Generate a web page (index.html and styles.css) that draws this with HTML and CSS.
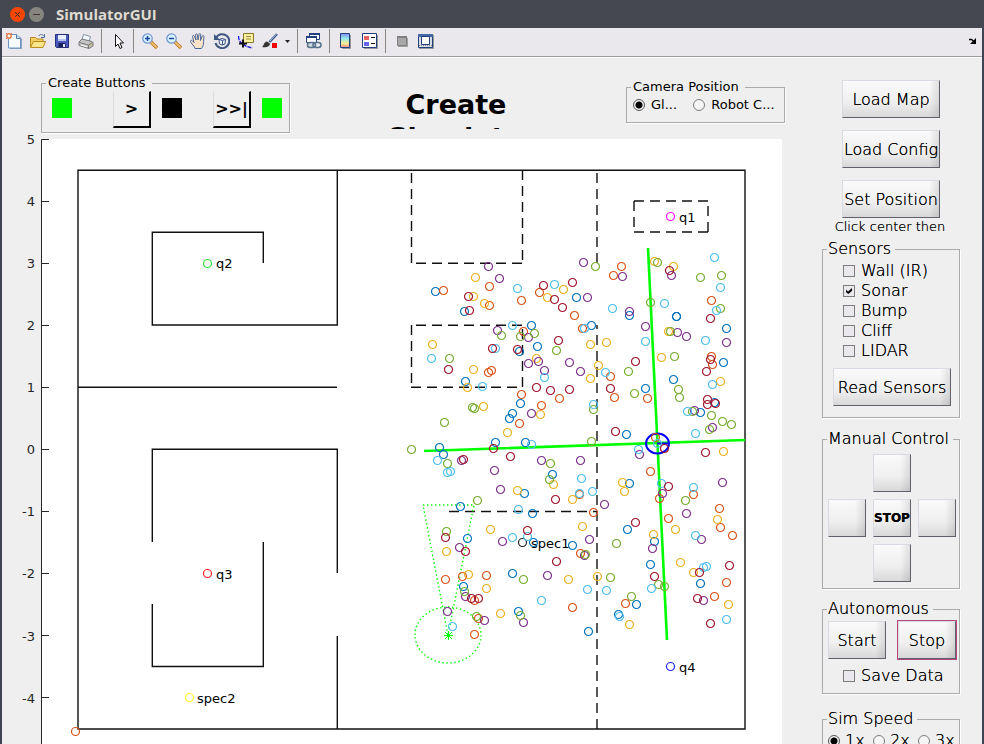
FILE: index.html
```html
<!DOCTYPE html>
<html lang="en">
<head>
<meta charset="utf-8">
<title>SimulatorGUI</title>
<link rel="stylesheet" href="styles.css">
</head>
<body>
<header class="titlebar">
  <button class="win close" aria-label="Close"><svg viewBox="0 0 15 15"><path d="M5 5l5 5M10 5l-5 5"/></svg></button>
  <button class="win minimize" aria-label="Minimize"><svg viewBox="0 0 15 15"><path d="M4 7.500h7"/></svg></button>
  <h1>SimulatorGUI</h1>
</header>
<div class="window">
  <nav class="toolbar" aria-label="Figure toolbar">
    <button class="tool" aria-label="New"><svg viewBox="0 0 16 16"><path d="M4 3h9l3 3v10H4z" fill="#8fa3ba"/><path d="M2.500 1.500h8l4 4v9.500h-12z" fill="#f5faff" stroke="#6f95c4"/><path d="M10.500 1.500v4h4" fill="#c9dcf2" stroke="#4f79b0"/><circle cx="3" cy="3" r="2.200" fill="#fff" stroke="#e07a50" stroke-width="1.500"/><path d="M0 0l1 1M6 0L5 1M0 6l1-1" stroke="#e07a50"/></svg></button>
    <button class="tool" aria-label="Open"><svg viewBox="0 0 16 16"><path d="M.5 14V4.500h5L7 6h6v3" fill="#f3cf63" stroke="#b98a1c"/><path d="M.5 14.500L3.500 8.500h12l-2.500 6z" fill="#fde68a" stroke="#b98a1c"/><path d="M8.500 3c2-2.500 4.500-1.500 5.500.5M14.500 1v3.500H11" fill="none" stroke="#4f6f9f"/></svg></button>
    <button class="tool" aria-label="Save"><svg viewBox="0 0 16 16"><path d="M1.500 1.500h13v13h-12l-1-1z" fill="#4a57bd" stroke="#252f78"/><path d="M4 2h8v6H4z" fill="#e9effb"/><path d="M4 6h8v2H4z" fill="#b6c5e8"/><path d="M4.500 10h7v4h-7z" fill="#18205c"/><path d="M9 11h2v3H9z" fill="#dde4f5"/></svg></button>
    <button class="tool" aria-label="Print"><svg viewBox="0 0 16 16"><path d="M4 7l1.500-5.500 7 2L11 9z" fill="#f6faff" stroke="#8093a8"/><path d="M1 9l3-3 10 2.500 1 1V13l-4 2.500L1 12.500z" fill="#c6c6c6" stroke="#777"/><path d="M1.500 9.500l9 2.500 4-2.500M10.500 12v3" fill="none" stroke="#777"/><path d="M3 12l6 1.800" stroke="#fff"/><path d="M11.500 12.700l2-1.200" stroke="#d6b234"/></svg></button>
    <span class="sep"></span>
    <button class="tool" aria-label="Edit plot"><svg viewBox="0 0 16 16"><path d="M5.500 1.500v12l2.500-2.500 2 4.500 2-1-2-4.500h3.500z" fill="#fff" stroke="#111"/></svg></button>
    <span class="sep"></span>
    <button class="tool" aria-label="Zoom in"><svg viewBox="0 0 16 16"><path d="M9 9l6 6" stroke="#b9792c" stroke-width="3.500"/><path d="M9 9l5.500 5.500" stroke="#f4bb6b" stroke-width="2"/><circle cx="5.500" cy="5.500" r="4.700" fill="#d9f2ff" stroke="#7498c9" stroke-width="1.300"/><path d="M3 5.500h5M5.500 3v5" stroke="#164a9c" stroke-width="1.500"/></svg></button>
    <button class="tool" aria-label="Zoom out"><svg viewBox="0 0 16 16"><path d="M9 9l6 6" stroke="#b9792c" stroke-width="3.500"/><path d="M9 9l5.500 5.500" stroke="#f4bb6b" stroke-width="2"/><circle cx="5.500" cy="5.500" r="4.700" fill="#d9f2ff" stroke="#7498c9" stroke-width="1.300"/><path d="M3 5.500h5" stroke="#164a9c" stroke-width="1.500"/></svg></button>
    <button class="tool" aria-label="Pan"><svg viewBox="0 0 16 16"><path d="M5 15.500c0-2-4-5-4.500-7C.5 7 2 7 2.500 8L4 9.500 2.500 3.500c0-1.500 1.500-1.500 2 0L6 7 5.500 2c0-1.500 2-1.500 2 0L8 7l1-5.500c0-1.500 2-1 1.700.5L10.500 7.500l1.500-4c.5-1.500 2.500-1 2 .5-1 4 .5 8-2.500 11.500z" fill="#fde3c8" stroke="#4a679a"/></svg></button>
    <button class="tool" aria-label="Rotate 3D"><svg viewBox="0 0 16 16"><path d="M2 5a7 7 0 1 1-.5 5" fill="none" stroke="#3f5680" stroke-width="2"/><path d="M0 1v6h6z" fill="#3f5680"/><path d="M5 6.500l3-1 3.500 1-.5 4.500-3 1-2.500-1zM5 6.500l3.500 1 3-1M8.500 7.500V12" fill="#eef4fc" stroke="#3f5680"/></svg></button>
    <button class="tool" aria-label="Data cursor"><svg viewBox="0 0 16 16"><path d="M.5 3c0 5 3 10 14 12" fill="none" stroke="#1515f0" stroke-width="1.300" stroke-dasharray="4 1"/><path d="M5.500.5h10v9h-7l-3 3z" fill="#f8f0a0" stroke="#8a7a2a"/><path d="M8 3.500h5M8 6h5" stroke="#9a8b40"/><path d="M1 10.500h8M5 6.500v8" stroke="#111" stroke-width="2"/></svg></button>
    <button class="tool" aria-label="Brush"><svg viewBox="0 0 16 16"><path d="M15 1L7.500 9" stroke="#3e5585" stroke-width="2.500"/><path d="M14.500 1L8 8" stroke="#9fc0ea"/><path d="M0 14c2-1 1.500-5 5-5.500l3 2c0 3-4 4.500-8 3.500z" fill="#333"/><path d="M10 10h5v5h-5z" fill="#f00000"/></svg></button>
    <button class="tool narrow" aria-label="Brush colour"><svg viewBox="0 0 16 16"><path d="M5 7h5l-2.500 3z" fill="#222"/></svg></button>
    <span class="sep"></span>
    <button class="tool" aria-label="Link plot"><svg viewBox="0 0 16 16"><path d="M3.500.5h10v6h-10z" fill="#fff" stroke="#23407e"/><path d="M3 0h11v2H3z" fill="#23407e"/><path d="M.5 3.500h10v6H.5z" fill="#fff" stroke="#23407e"/><path d="M0 3h11v2H0z" fill="#23407e"/><rect x="1.500" y="9.500" width="8" height="5" rx="2.500" fill="#cfdbe6" stroke="#58718c" stroke-width="1.500"/><rect x="7" y="9.500" width="8" height="5" rx="2.500" fill="none" stroke="#58718c" stroke-width="1.500"/></svg></button>
    <span class="sep"></span>
    <button class="tool" aria-label="Insert colorbar"><svg viewBox="0 0 16 16"><defs><linearGradient id="bar" x2="0" y2="1"><stop offset="0" stop-color="#8a8af5"/><stop offset=".35" stop-color="#8fe8f0"/><stop offset=".7" stop-color="#f5ee94"/><stop offset="1" stop-color="#f08c8c"/></linearGradient></defs><path d="M4 2h9v14H4z" fill="#999"/><path d="M2.500.5h9v14h-9z" fill="url(#bar)" stroke="#23407e"/></svg></button>
    <button class="tool" aria-label="Insert legend"><svg viewBox="0 0 16 16"><path d="M2 2h14v14H2z" fill="#999"/><path d="M.5.5h14v14H.5z" fill="#fff" stroke="#23407e"/><path d="M2 3h5v4H2z" fill="#e86464"/><path d="M2 9h5v4H2z" fill="#6464e8"/><path d="M9 4.500h4M9 10.500h4" stroke="#111"/></svg></button>
    <span class="sep"></span>
    <button class="tool" aria-label="Hide plot tools"><svg viewBox="0 0 16 16"><path d="M4 5h10v9H4z" fill="#a0a0a0"/><path d="M3.500 3.500h9v9h-9z" fill="#a8a8a8" stroke="#808080"/><path d="M3 3h10v2H3z" fill="#808080"/></svg></button>
    <button class="tool" aria-label="Show plot tools"><svg viewBox="0 0 16 16"><path d="M1 2h15v14H1z" fill="#999"/><path d="M.5 1.500h14v13H.5z" fill="#d8dde3" stroke="#23407e"/><path d="M0 1h15v3H0z" fill="#4468a8"/><path d="M3.500 3.500h8v8h-8z" fill="#fff" stroke="#23407e"/><path d="M1 12.500h13" stroke="#888" stroke-dasharray="1 1"/></svg></button>
    <button class="tool narrow dock" aria-label="Dock"><svg viewBox="0 0 16 16"><path d="M4 6.500h2.500l3.500 3" fill="none" stroke="#000" stroke-width="1.500"/><path d="M11 5v6H5z" fill="#000"/></svg></button>
  </nav>
  <main class="figure">
    <section class="stage">
      <div class="top">
        <fieldset class="panel create">
          <legend>Create Buttons</legend>
          <span class="lamp on"></span>
          <button class="flat">&gt;</button>
          <span class="lamp"></span>
          <button class="flat">&gt;&gt;|</button>
          <span class="lamp on"></span>
        </fieldset>
        <h2>Create Simulator</h2>
        <fieldset class="panel camera">
          <legend>Camera Position</legend>
          <label><input type="radio" name="camera" checked>Gl...</label>
          <label><input type="radio" name="camera">Robot C...</label>
        </fieldset>
      </div>
      <svg class="plot" viewBox="2 139 780 605" role="img" aria-label="Simulator map">
        <defs>
          <marker id="m1" class="dot s1" markerUnits="userSpaceOnUse" markerWidth="12" markerHeight="12" viewBox="-6 -6 12 12"><circle r="4"/></marker>
          <marker id="m2" class="dot s2" markerUnits="userSpaceOnUse" markerWidth="12" markerHeight="12" viewBox="-6 -6 12 12"><circle r="4"/></marker>
          <marker id="m3" class="dot s3" markerUnits="userSpaceOnUse" markerWidth="12" markerHeight="12" viewBox="-6 -6 12 12"><circle r="4"/></marker>
          <marker id="m4" class="dot s4" markerUnits="userSpaceOnUse" markerWidth="12" markerHeight="12" viewBox="-6 -6 12 12"><circle r="4"/></marker>
          <marker id="m5" class="dot s5" markerUnits="userSpaceOnUse" markerWidth="12" markerHeight="12" viewBox="-6 -6 12 12"><circle r="4"/></marker>
          <marker id="m6" class="dot s6" markerUnits="userSpaceOnUse" markerWidth="12" markerHeight="12" viewBox="-6 -6 12 12"><circle r="4"/></marker>
          <marker id="m7" class="dot s7" markerUnits="userSpaceOnUse" markerWidth="12" markerHeight="12" viewBox="-6 -6 12 12"><circle r="4"/></marker>
        </defs>
        <rect x="42" y="139" width="740" height="605" fill="#fff"/>
        <path class="axis" d="M41.500 744V139.500H49M41 201.500h8M41 263.500h8M41 325.500h8M41 387.500h8M41 449.500h8M41 511.500h8M41 573.500h8M41 635.500h8M41 697.500h8"/>
        <g class="ticks">
          <text x="35" y="144">5</text><text x="35" y="206">4</text><text x="35" y="268">3</text><text x="35" y="330">2</text><text x="35" y="392">1</text><text x="35" y="454">0</text><text x="35" y="516">-1</text><text x="35" y="578">-2</text><text x="35" y="641">-3</text><text x="35" y="703">-4</text>
        </g>
        <path class="wall" d="M78 170.300H745V729H78zM337.300 170V325H152.300V232.300H263.300V263M78 387.300H337M337.300 573V449.300H152.300V542M152.300 604V666.500H263.300V542M337.300 636V729"/>
        <path class="dashed" d="M522.500 170V263M522 263.300H411M411.500 263V170M597 263V170M597 729V325M411.500 325V387M522 325.300H411M411 387.300H522M522.500 387V325M449 511.500H597M634 201H708M634 232H708M634 201V232M708 232V201"/>
        <path class="beam" d="M424 451L745 440M648 248L667 640"/>
        <path class="cone" d="M423 505H474L448 635zM415 635a33 28 0 0 1 66 0a33 28 0 0 1-66 0"/>
        <path class="star" d="M448.500 631v9M444 635.500h9M445 632l7 7M452 632l-7 7"/>
        <ellipse class="robot" cx="657.500" cy="443.500" rx="11.500" ry="10"/>
        <path class="robot" d="M657 443.500h12"/>
        <g class="labels">
          <text x="679" y="222">q1</text><text x="216" y="268">q2</text><text x="216" y="579">q3</text><text x="679" y="672">q4</text><text x="531" y="548">spec1</text><text x="197" y="703">spec2</text>
        </g>
        <g class="dot">
          <circle cx="670.500" cy="216.500" r="4" stroke="#f0f"/><circle cx="207.500" cy="263.500" r="4" stroke="#2fe62f"/><circle cx="207.500" cy="573.500" r="4" stroke="#f22"/><circle cx="670.500" cy="666.500" r="4" stroke="#22f"/><circle cx="522.500" cy="542.500" r="4" stroke="#222"/><circle cx="189.500" cy="697.500" r="4" stroke="#ff2"/><circle cx="75.500" cy="731.500" r="4" stroke="#d95319"/>
        </g>
        <g transform="translate(.5 .5)">
          <polyline class="pts1" points="435,291 464,311 576,297 629,315 676,316 676,316 531,325 537,346 519,351 465,381 520,403 512,413 509,418 495,442 525,442 439,447 443,454 552,474 591,325 723,362 726,328 673,379 645,388 626,434 700,412 714,402 524,493 460,506 532,513 467,538 533,542 572,545 512,573 463,586 518,611 629,483 627,529 654,541 650,564 700,583 636,604 618,614 588,631"/>
          <polyline class="pts2" points="443,290 489,286 489,305 521,300 539,292 574,315 621,266 613,275 711,300 523,331 488,372 491,370 521,394 541,405 559,398 519,423 582,328 610,376 614,397 647,398 711,356 712,364 650,471 655,437 445,579 462,576 486,575 474,600 478,618 474,634 572,607 579,494 593,512 580,553 659,498 693,494 668,518 719,508 720,527 732,535 726,582 714,596 625,603"/>
          <polyline class="pts3" points="475,277 473,296 484,303 563,289 547,297 654,261 673,266 432,344 473,369 467,387 536,358 483,406 540,414 507,432 590,344 606,342 598,365 590,378 668,331 661,357 720,381 723,451 517,490 553,484 572,499 490,529 446,551 468,574 486,588 568,579 500,613 622,482 624,491 582,526 653,534 675,529 717,519 680,562 597,576 693,572 728,604 629,624"/>
          <polyline class="pts4" points="488,266 499,278 583,262 622,276 587,297 629,311 671,275 497,330 528,337 528,363 538,361 544,370 569,362 580,371 531,413 461,460 494,470 541,460 580,460 645,326 677,332 686,336 726,342 694,410 712,427 639,454 722,482 500,489 459,547 502,541 547,575 465,596 447,611 484,620 523,622 604,504 589,539 584,555 662,493 686,513 701,539 652,548 703,600"/>
          <polyline class="pts5" points="595,266 657,262 650,302 700,277 721,275 720,308 501,335 520,336 534,333 449,358 556,350 472,407 474,408 444,422 411,449 447,463 550,463 549,479 670,331 674,356 628,371 634,393 593,409 591,441 678,389 679,397 692,411 711,415 722,421 731,424 709,429 477,500 446,531 523,579 464,591 476,616 520,615 585,554 616,543 610,577 658,584 664,586 685,500 631,596"/>
          <polyline class="pts6" points="517,288 554,284 714,257 720,287 716,310 612,308 664,303 512,325 431,358 495,348 482,386 544,377 531,444 437,460 447,472 450,471 584,328 645,341 605,372 593,404 705,340 712,384 687,411 695,433 638,449 581,478 657,443 518,509 512,537 527,536 541,600 452,626 579,493 592,491 661,483 693,487 695,535 706,566 703,567 587,589 606,590 651,588 619,616 726,619"/>
          <polyline class="pts7" points="468,296 469,310 543,285 554,299 562,307 572,282 669,270 710,318 492,348 517,349 448,369 558,340 536,387 550,390 569,389 493,448 510,456 463,459 635,361 710,359 706,371 610,388 615,431 707,399 707,404 715,403 705,452 664,448 555,499 445,537 465,551 527,530 556,561 471,598 478,598 668,486 635,522 654,576 699,572 729,565 697,598 710,623"/>
        </g>
      </svg>
    </section>
    <aside class="side">
      <div class="loads">
        <button class="push">Load Map</button>
        <button class="push">Load Config</button>
        <button class="push">Set Position</button>
      </div>
      <p class="hint">Click center then direction</p>
      <fieldset class="panel sensors">
        <legend>Sensors</legend>
        <label><input type="checkbox">Wall (IR)</label>
        <label><input type="checkbox" checked>Sonar</label>
        <label><input type="checkbox">Bump</label>
        <label><input type="checkbox">Cliff</label>
        <label><input type="checkbox">LIDAR</label>
        <button class="push">Read Sensors</button>
      </fieldset>
      <fieldset class="panel manual">
        <legend>Manual Control</legend>
        <div class="pad">
          <button class="push up" aria-label="Forward"></button>
          <button class="push left" aria-label="Left"></button>
          <button class="push halt">STOP</button>
          <button class="push right" aria-label="Right"></button>
          <button class="push down" aria-label="Backward"></button>
        </div>
      </fieldset>
      <fieldset class="panel auto">
        <legend>Autonomous</legend>
        <div class="run">
          <button class="push">Start</button>
          <button class="push focus">Stop</button>
        </div>
        <label><input type="checkbox">Save Data</label>
      </fieldset>
      <fieldset class="panel speed">
        <legend>Sim Speed</legend>
        <div class="rates">
          <label><input type="radio" name="speed" checked>1x</label>
          <label><input type="radio" name="speed">2x</label>
          <label><input type="radio" name="speed">3x</label>
        </div>
      </fieldset>
    </aside>
  </main>
</div>
</body>
</html>
```
FILE: styles.css
```css
* { box-sizing: border-box; }

body {
  margin: 0;
  height: 100vh;
  overflow: hidden;
  display: flex;
  flex-direction: column;
  background: #3f4352;
  color: #000;
  font: 13px/16px "DejaVu Sans", sans-serif;
}

button { font: inherit; color: inherit; text-shadow: inherit; padding: 0; margin: 0; border: 0; background: none; white-space: nowrap; }

.titlebar {
  flex: none;
  height: 28px;
  padding-left: 10px;
  display: flex;
  align-items: center;
  gap: 4px;
  background: #454850;
}
.titlebar h1 { margin: 0 0 0 8px; font: bold 15px/20px "Open Sans", sans-serif; color: #dfdbd2; }
.win { width: 15px; height: 15px; border-radius: 50%; }
.win svg { display: block; fill: none; stroke: #40352f; }
.close { background: #fb4606; }
.minimize { background: #85847f; }

.window { flex: 1; min-height: 0; margin: 0 2px; overflow: hidden; background: #efefef; }

.toolbar {
  display: flex;
  align-items: center;
  height: 30px;
  padding-bottom: 3px;
  background: #eae8ed;
  border-bottom: 1px solid #fff;
  box-shadow: inset 0 -1px #9d9da0;
}
.tool { width: 24px; height: 24px; display: flex; align-items: center; justify-content: center; }
.tool svg { flex: none; width: 16px; height: 16px; fill: none; }
.narrow { width: 12px; }
.dock { margin-left: auto; margin-right: 3px; }
.sep { width: 8px; height: 24px; background: linear-gradient(#8a8780, #8a8780) 3px 0 / 1px 100% no-repeat; }

.figure { display: grid; grid-template-columns: minmax(0, 1fr) 196px; }
.top { height: 81px; padding: 0 1px 0 39px; display: flex; justify-content: space-between; align-items: flex-start; }
.plot { display: block; width: calc(100% - 4px); overflow: visible; }

.panel { min-width: 0; margin: 0; padding: 0; border: 1px solid #ababab; box-shadow: 1px 1px #fff; }
.panel legend { margin-left: 4px; padding: 0 6px 0 2px; }

.create { width: 249px; height: 58px; margin-top: 17px; }
.create .lamp, .create .flat { float: left; }
.lamp { width: 20px; height: 20px; margin: 7px 0 0 11px; background: #000; }
.lamp.on:first-of-type { margin-left: 10px; }
.lamp.on { background: #0f0; }
.flat {
  width: 38px;
  height: 37px;
  margin-left: 31px;
  border: solid;
  border-width: 1px 2px 2px 1px;
  border-color: #efefef #000 #000 #dcdce2;
  font-weight: bold;
  font-size: 16px;
}
.lamp:first-of-type + .flat { margin-left: 41px; }

.top h2 { width: 136px; height: 41px; margin: 30px 4px 0 0; overflow: hidden; text-align: center; font-size: 27px; line-height: 33px; }

.camera { width: 159px; height: 44px; margin-top: 21px; }
.camera label { margin-left: 6px; padding-top: 2px; }
.camera label + label { margin-left: 12px; }

label { display: inline-flex; align-items: center; gap: 6px; white-space: nowrap; }
input { appearance: none; flex: none; width: 12px; height: 12px; margin: 0; border: 1px solid #7d7d7d; background: #eae8ed; }
input[type="radio"] { border-radius: 50%; background: #f4f4f4; }
input[type="radio"]:checked { background: radial-gradient(circle, #000 3px, #f4f4f4 4px); border-color: #555; }
input[type="checkbox"]:checked::after {
  content: "";
  display: block;
  width: 6px;
  height: 6px;
  margin: 2px;
  background: #000;
  clip-path: polygon(0 30%, 35% 60%, 100% 0, 100% 45%, 40% 100%, 0 70%);
}

.side { padding: 22px 22px 0 36px; font-size: 16px; line-height: 20px; font-weight: 200; text-shadow: 0 0 #000; }
.push {
  height: 38px;
  border: 1px solid;
  border-color: #dadae2 #62606c #62606c #dadae2;
  background:
    linear-gradient(to right, transparent calc(100% - 10px), #0000001a),
    linear-gradient(#fafafa, #efefef 60%, #d8d8d8);
}
.loads { display: flex; flex-direction: column; align-items: center; gap: 12px; }
.loads .push { width: 98px; padding-top: 2px; }
.hint { height: 21px; margin: 0 10px 0 8px; overflow: hidden; text-align: center; font-size: 13px; line-height: 18px; }
.side .panel { width: 138px; }
.side legend { padding-left: 1px; padding-right: 4px; }

.sensors { height: 179px; }
.sensors label { display: flex; margin-left: 20px; }
.sensors legend + label { margin-top: 2px; }
.sensors .push { display: block; width: 118px; margin: 7px 0 0 10px; padding-top: 2px; }

.manual { height: 160px; margin-top: 11px; }
.pad { display: grid; grid-template: "a up b" "left halt right" "c down d" / 38px 38px 38px; gap: 7px; padding: 5px; }
.up { grid-area: up; }
.left { grid-area: left; }
.halt { grid-area: halt; font-size: 12px; font-weight: bold; }
.right { grid-area: right; }
.down { grid-area: down; }

.auto { height: 95px; margin-top: 10px; }
.run { display: flex; justify-content: space-between; padding: 2px 3px 0 5px; }
.run .push { width: 58px; padding-top: 2px; }
.run .focus { outline: 1px solid #b04a78; }
.auto label { margin: 7px 0 0 20px; }

.speed { height: 60px; margin-top: 15px; }
.rates { display: grid; grid-template-columns: repeat(3, 45px); padding: 2px 0 0 5px; }
.rates label { gap: 5px; }

.axis { fill: none; stroke: #262626; }
.ticks { fill: #262626; text-anchor: end; }
.wall { fill: none; stroke: #111; stroke-width: 1.4; }
.dashed { fill: none; stroke: #111; stroke-width: 1.4; stroke-dasharray: 10 6; }
.beam { stroke: #0f0; stroke-width: 2.6; }
.cone { fill: none; stroke: #0f0; stroke-width: 1.4; stroke-dasharray: 1.4 2.6; }
.star { stroke: #0f0; }
.robot { fill: none; stroke: #00f; stroke-width: 2; }
.dot { fill: none; stroke-width: 1.2; }
.s1 { stroke: #0072bd; }
.s2 { stroke: #d95319; }
.s3 { stroke: #edb120; }
.s4 { stroke: #7e2f8e; }
.s5 { stroke: #77ac30; }
.s6 { stroke: #4dbeee; }
.s7 { stroke: #a2142f; }
polyline { fill: none; stroke: none; }
.pts1 { marker: url(#m1); }
.pts2 { marker: url(#m2); }
.pts3 { marker: url(#m3); }
.pts4 { marker: url(#m4); }
.pts5 { marker: url(#m5); }
.pts6 { marker: url(#m6); }
.pts7 { marker: url(#m7); }
```
